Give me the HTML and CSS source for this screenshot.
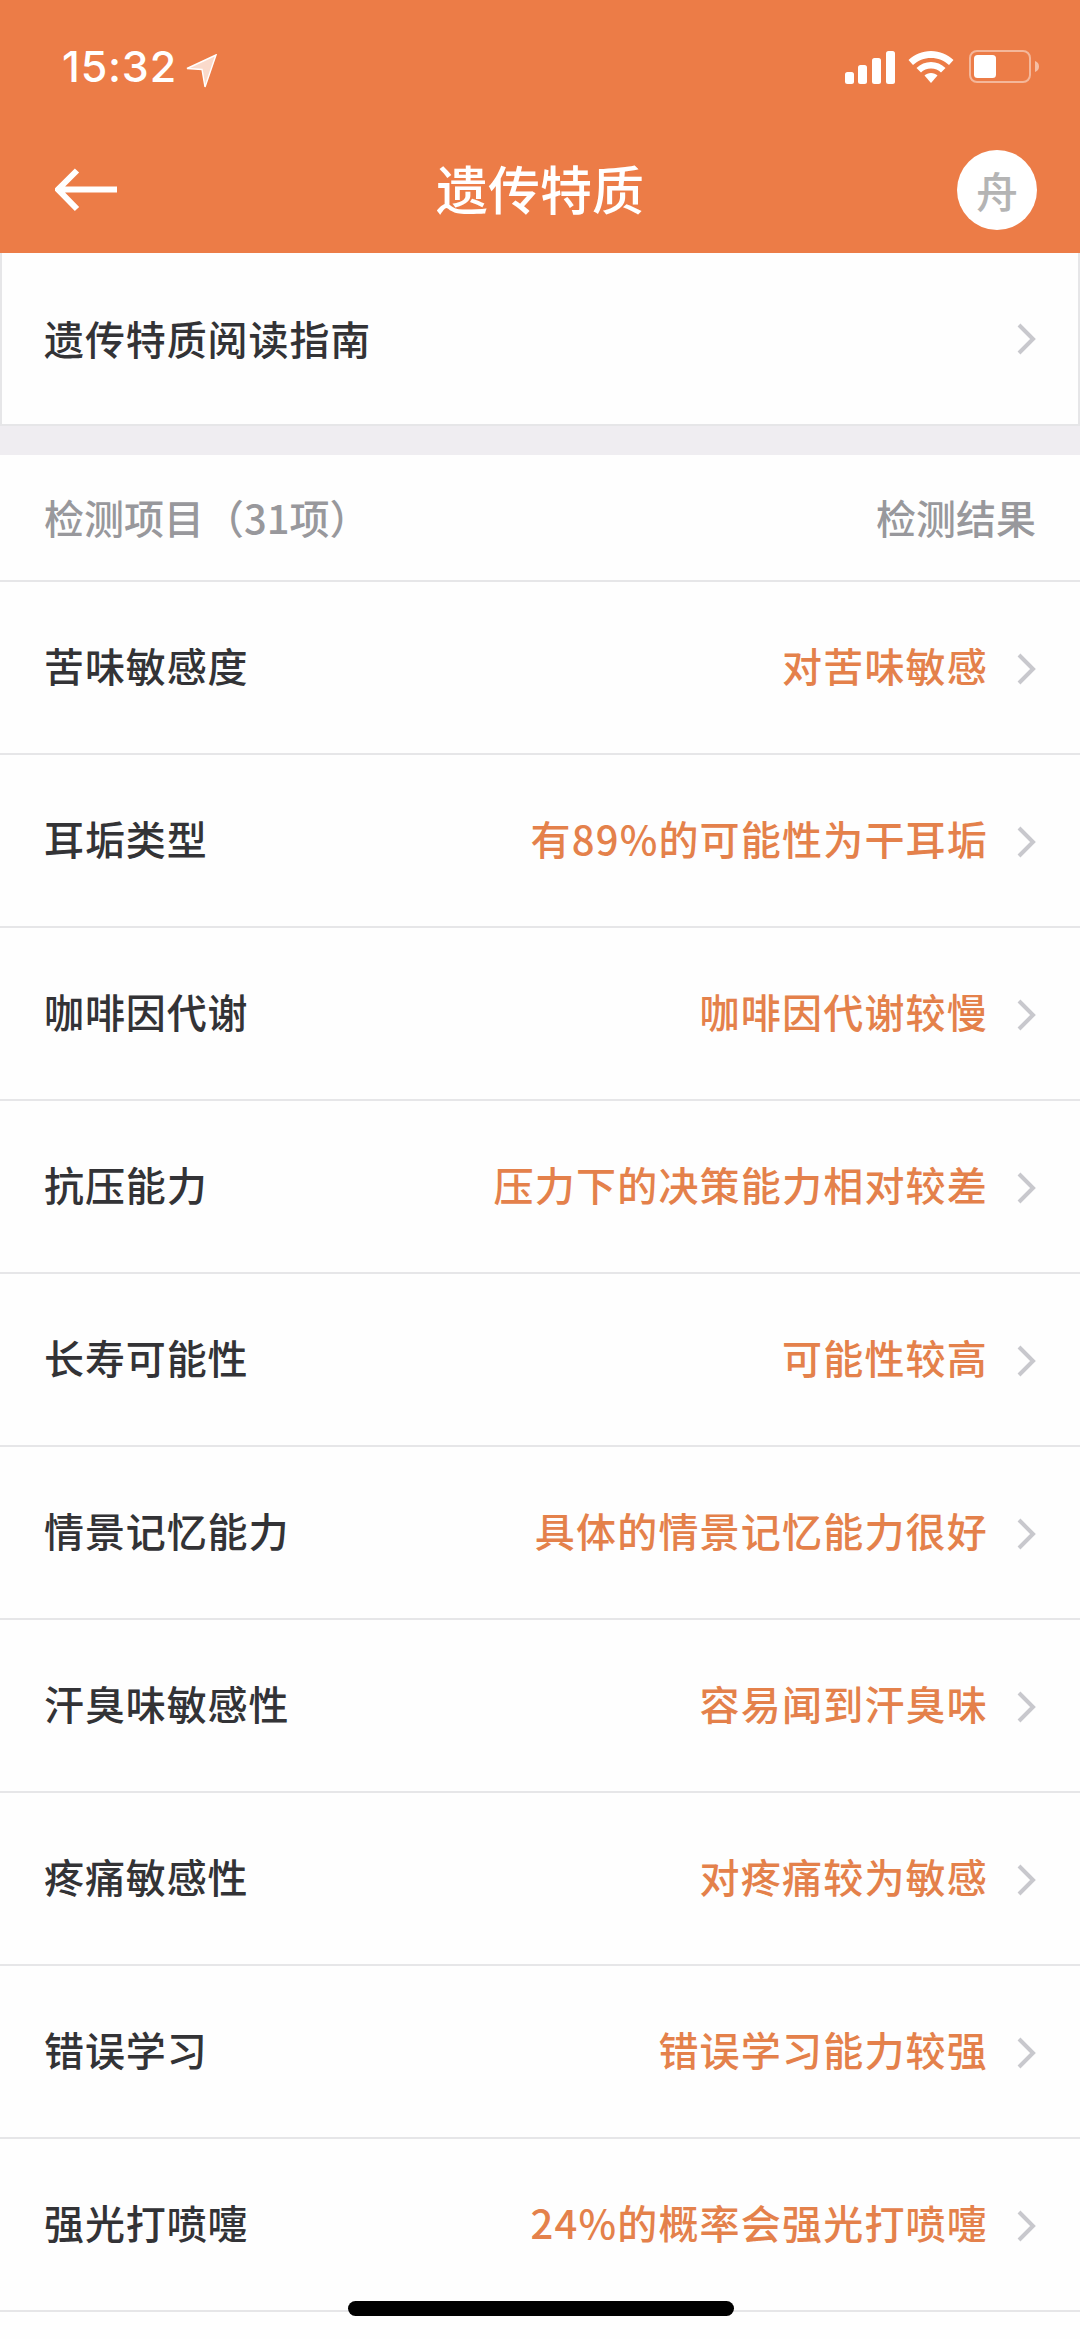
FILE: index.html
```html
<!DOCTYPE html>
<html lang="zh-CN">
<head>
<meta charset="utf-8">
<title>遗传特质</title>
<link rel="stylesheet" href="styles.css">
</head>
<body>
<div class="page">
  <header class="top">
    <div class="status">
      <div class="clock"><span>15:32</span>
        <svg class="loc" width="31" height="34" viewBox="0 0 31 34"><path d="M30 1L1 14.500L16 15.500L19 33Z" fill="#fff" fill-opacity=".72" stroke="#fff" stroke-width="1.400"/></svg>
      </div>
      <div class="sys">
        <svg width="50" height="33" viewBox="0 0 50 33"><g fill="#fff"><rect x="0" y="21" width="9" height="12" rx="2.500"/><rect x="13" y="14" width="9" height="19" rx="2.500"/><rect x="27" y="7" width="9" height="26" rx="2.500"/><rect x="41" y="0" width="9" height="33" rx="2.500"/></g></svg>
        <svg width="46" height="32" viewBox="0 0 46 32"><g fill="#fff"><path d="M23 0C14 0 6.500 3.500 0.500 9L5 14C10 9.500 16 7 23 7S36 9.500 41 14L45.500 9C39.500 3.500 32 0 23 0Z"/><path d="M23 11C17.500 11 12.500 13 8.500 17L13 21.500C15.500 19 19 17.500 23 17.500S30.500 19 33 21.500L37.500 17C33.500 13 28.500 11 23 11Z"/><path d="M23 22C20.500 22 18 23 16.500 24.500L23 32L29.500 24.500C28 23 25.500 22 23 22Z"/></g></svg>
        <svg class="batt" width="72" height="33" viewBox="0 0 72 33"><rect x="1" y="1" width="60" height="31" rx="7" fill="none" stroke="#fff" stroke-opacity=".45" stroke-width="2"/><rect x="5" y="5" width="22" height="23" rx="3.500" fill="#fff"/><path d="M66 11C69 12 70 14 70 16.500S69 21 66 22Z" fill="#fff" fill-opacity=".5"/></svg>
      </div>
    </div>
    <div class="nav">
      <svg class="back" width="64" height="44" viewBox="0 0 64 44"><path d="M62 21.500H5M22 2.500L3 21.500L22 41" fill="none" stroke="#fff" stroke-width="6"/></svg>
      <h1 class="title">遗传特质</h1>
      <div class="avatar">舟</div>
    </div>
  </header>

  <div class="guide row">
    <span class="label">遗传特质阅读指南</span>
    <svg class="chev" viewBox="0 0 20 32"><path d="M3 2L17 16L3 30" fill="none" stroke="#c8c8cd" stroke-width="4"/></svg>
  </div>
  <div class="gap"></div>
  <div class="head">
    <span>检测项目（31项）</span>
    <span>检测结果</span>
  </div>

  <ul class="list">
    <li class="row"><span class="label">苦味敏感度</span><span class="value">对苦味敏感</span><svg class="chev" viewBox="0 0 20 32"><path d="M3 2L17 16L3 30" fill="none" stroke="#c8c8cd" stroke-width="4"/></svg></li>
    <li class="row"><span class="label">耳垢类型</span><span class="value">有89%的可能性为干耳垢</span><svg class="chev" viewBox="0 0 20 32"><path d="M3 2L17 16L3 30" fill="none" stroke="#c8c8cd" stroke-width="4"/></svg></li>
    <li class="row"><span class="label">咖啡因代谢</span><span class="value">咖啡因代谢较慢</span><svg class="chev" viewBox="0 0 20 32"><path d="M3 2L17 16L3 30" fill="none" stroke="#c8c8cd" stroke-width="4"/></svg></li>
    <li class="row"><span class="label">抗压能力</span><span class="value">压力下的决策能力相对较差</span><svg class="chev" viewBox="0 0 20 32"><path d="M3 2L17 16L3 30" fill="none" stroke="#c8c8cd" stroke-width="4"/></svg></li>
    <li class="row"><span class="label">长寿可能性</span><span class="value">可能性较高</span><svg class="chev" viewBox="0 0 20 32"><path d="M3 2L17 16L3 30" fill="none" stroke="#c8c8cd" stroke-width="4"/></svg></li>
    <li class="row"><span class="label">情景记忆能力</span><span class="value">具体的情景记忆能力很好</span><svg class="chev" viewBox="0 0 20 32"><path d="M3 2L17 16L3 30" fill="none" stroke="#c8c8cd" stroke-width="4"/></svg></li>
    <li class="row"><span class="label">汗臭味敏感性</span><span class="value">容易闻到汗臭味</span><svg class="chev" viewBox="0 0 20 32"><path d="M3 2L17 16L3 30" fill="none" stroke="#c8c8cd" stroke-width="4"/></svg></li>
    <li class="row"><span class="label">疼痛敏感性</span><span class="value">对疼痛较为敏感</span><svg class="chev" viewBox="0 0 20 32"><path d="M3 2L17 16L3 30" fill="none" stroke="#c8c8cd" stroke-width="4"/></svg></li>
    <li class="row"><span class="label">错误学习</span><span class="value">错误学习能力较强</span><svg class="chev" viewBox="0 0 20 32"><path d="M3 2L17 16L3 30" fill="none" stroke="#c8c8cd" stroke-width="4"/></svg></li>
    <li class="row"><span class="label">强光打喷嚏</span><span class="value">24%的概率会强光打喷嚏</span><svg class="chev" viewBox="0 0 20 32"><path d="M3 2L17 16L3 30" fill="none" stroke="#c8c8cd" stroke-width="4"/></svg></li>
  </ul>
  <div class="home"></div>
</div>
</body>
</html>
```
FILE: styles.css
```css
* { box-sizing: border-box; }
html, body { margin: 0; padding: 0; background: #fefefe; }
body { font-family: "Liberation Sans", "Noto Sans CJK SC", sans-serif; }
.page { position: relative; width: 1080px; height: 2339px; overflow: hidden; background: #fefefe; }
.top { height: 253px; background: #ec7c47; color: #fff; display: flex; flex-direction: column; }
.status { height: 130px; padding: 44px 39px 0 62px; display: flex; justify-content: space-between; align-items: flex-start; }
.clock { display: flex; align-items: center; gap: 9px; font: 500 43px/44px Inter, Roboto, sans-serif; letter-spacing: 0.8px; }
.loc { margin-top: 10px; }
.sys { display: flex; align-items: flex-start; gap: 13px; margin-top: 7px; color: #fff; }
.batt { margin-left: 2px; margin-top: -1px; }
.nav { flex: 1; position: relative; display: flex; justify-content: space-between; align-items: center; padding: 0 43px 0 55px; margin-top: -3px; }
.title { position: absolute; left: 0; right: 0; top: 29px; margin: 0; text-align: center; font: 500 52px/64px "Noto Sans CJK SC", sans-serif; }
.avatar { width: 80px; height: 80px; border-radius: 50%; background: #fff; color: #b4b4b4; font: 500 42px/80px "Noto Sans CJK SC", sans-serif; text-align: center; }
.row { display: flex; align-items: center; height: 173px; padding: 0 44px 5px 44px; border-bottom: 2px solid #e6e6e8; }
.label { flex: 1; font: 500 40px/56px "Noto Sans CJK SC", sans-serif; color: #333336; letter-spacing: 0.9px; white-space: nowrap; }
.value { font: 500 40px/56px "Noto Sans CJK SC", sans-serif; color: #e4814b; letter-spacing: 1.2px; white-space: nowrap; }
.chev { width: 20px; height: 32px; margin-left: 28px; flex: none; position: relative; top: 4px; }
.guide { height: 173px; border-left: 2px solid #e6e6e8; border-right: 2px solid #e6e6e8; padding: 0 42px 2px 42px; }
.guide .chev { top: 1px; }
.gap { height: 29px; background: #efedf1; }
.head { height: 127px; padding: 0 44px 2px; display: flex; justify-content: space-between; align-items: center; font: 500 40px/56px "Noto Sans CJK SC", sans-serif; color: #98989c; border-bottom: 2px solid #e6e6e8; }
.list { list-style: none; margin: 0; padding: 0; }
.home { position: absolute; left: 348px; top: 2301px; width: 386px; height: 15px; border-radius: 8px; background: #000; }
```
